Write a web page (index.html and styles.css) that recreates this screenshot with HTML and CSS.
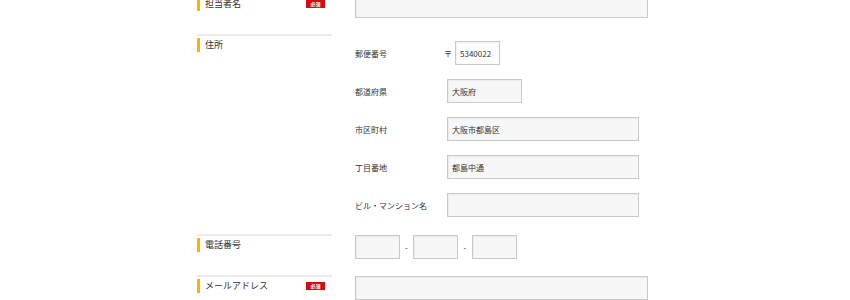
FILE: index.html
```html
<!DOCTYPE html>
<html lang="ja">
<head>
<meta charset="utf-8">
<link rel="stylesheet" href="styles.css">
</head>
<body>
<div class="form">
  <div class="row">
    <div class="label-cell">
      <div class="label"><span>担当者名</span><span class="req">必須</span></div>
    </div>
    <div class="field-cell">
      <input class="inp full" type="text" value="">
    </div>
  </div>

  <div class="row">
    <div class="label-cell">
      <div class="label"><span>住所</span></div>
    </div>
    <div class="field-cell">
      <div class="sub">
        <div class="sub-row">
          <div class="sub-label">郵便番号</div>
          <div class="sub-value"><span class="zip-mark">〒</span><input class="inp zip" type="text" value="5340022"></div>
        </div>
        <div class="sub-row">
          <div class="sub-label">都道府県</div>
          <div class="sub-value"><input class="inp pref" type="text" value="大阪府"></div>
        </div>
        <div class="sub-row">
          <div class="sub-label">市区町村</div>
          <div class="sub-value"><input class="inp mid" type="text" value="大阪市都島区"></div>
        </div>
        <div class="sub-row">
          <div class="sub-label">丁目番地</div>
          <div class="sub-value"><input class="inp mid" type="text" value="都島中通"></div>
        </div>
        <div class="sub-row">
          <div class="sub-label">ビル・マンション名</div>
          <div class="sub-value"><input class="inp mid" type="text" value=""></div>
        </div>
      </div>
    </div>
  </div>

  <div class="row">
    <div class="label-cell">
      <div class="label"><span>電話番号</span></div>
    </div>
    <div class="field-cell">
      <div class="tel">
        <input class="inp tel-part" type="text" value="">
        <span class="dash">-</span>
        <input class="inp tel-part" type="text" value="">
        <span class="dash">-</span>
        <input class="inp tel-part" type="text" value="">
      </div>
    </div>
  </div>

  <div class="row">
    <div class="label-cell">
      <div class="label"><span>メールアドレス</span><span class="req">必須</span></div>
    </div>
    <div class="field-cell">
      <input class="inp full" type="text" value="">
    </div>
  </div>
</div>
</body>
</html>
```

FILE: styles.css
```css
* { box-sizing: border-box; }
html, body { margin: 0; padding: 0; background: #fff; }
body {
  font-family: "Noto Sans CJK JP", "Noto Sans", sans-serif;
  color: #333;
}
.form {
  width: 456px;
  margin: -7px auto 0;
}
.row {
  display: flex;
  gap: 23px;
}
.label-cell {
  width: 135px;
  flex: none;
  border-top: 2px solid #ebebeb;
  padding-top: 2px;
}
.label {
  display: flex;
  align-items: center;
  justify-content: space-between;
  height: 14px;
  border-left: 3px solid #f5b400;
  padding-left: 5px;
  font-size: 9px;
  line-height: 14px;
}
.req {
  display: block;
  width: 19px;
  height: 8px;
  margin-right: 7px;
  background: #d40b17;
  color: #fff;
  font-size: 5px;
  line-height: 8px;
  text-align: center;
  font-weight: bold;
}
.field-cell {
  flex: 1;
  padding-top: 1px;
  padding-bottom: 16px;
}
.inp {
  display: block;
  height: 24px;
  border: 1px solid #c9c9c9;
  background: #f7f7f7;
  box-shadow: inset 1px 1px 1px rgba(0,0,0,0.05);
  padding: 0 4px;
  font-family: "Noto Sans CJK JP", "Noto Sans", sans-serif;
  font-size: 8px;
  color: #333;
  border-radius: 0;
  outline: none;
  margin: 0;
}
.full { width: 293px; }
.sub { padding-top: 6px; padding-bottom: 1px; }
.sub-row {
  display: flex;
  align-items: center;
  height: 24px;
  margin-bottom: 14px;
}
.sub-row:last-child { margin-bottom: 0; }
.sub-label {
  width: 92px;
  flex: none;
  font-size: 8px;
}
.sub-value {
  display: flex;
  align-items: center;
}
.zip-mark {
  font-size: 8px;
  width: 8px;
  margin-left: -3px;
  margin-right: 3px;
  text-align: center;
}
.zip { width: 45px; background: #fdfdfd; }
.pref { width: 75px; }
.mid { width: 192px; }
.tel {
  display: flex;
  align-items: center;
}
.tel-part { width: 45px; }
.dash {
  font-size: 8px;
  width: 13px;
  text-align: center;
}
.dash + .tel-part + .dash { width: 14px; }
```
